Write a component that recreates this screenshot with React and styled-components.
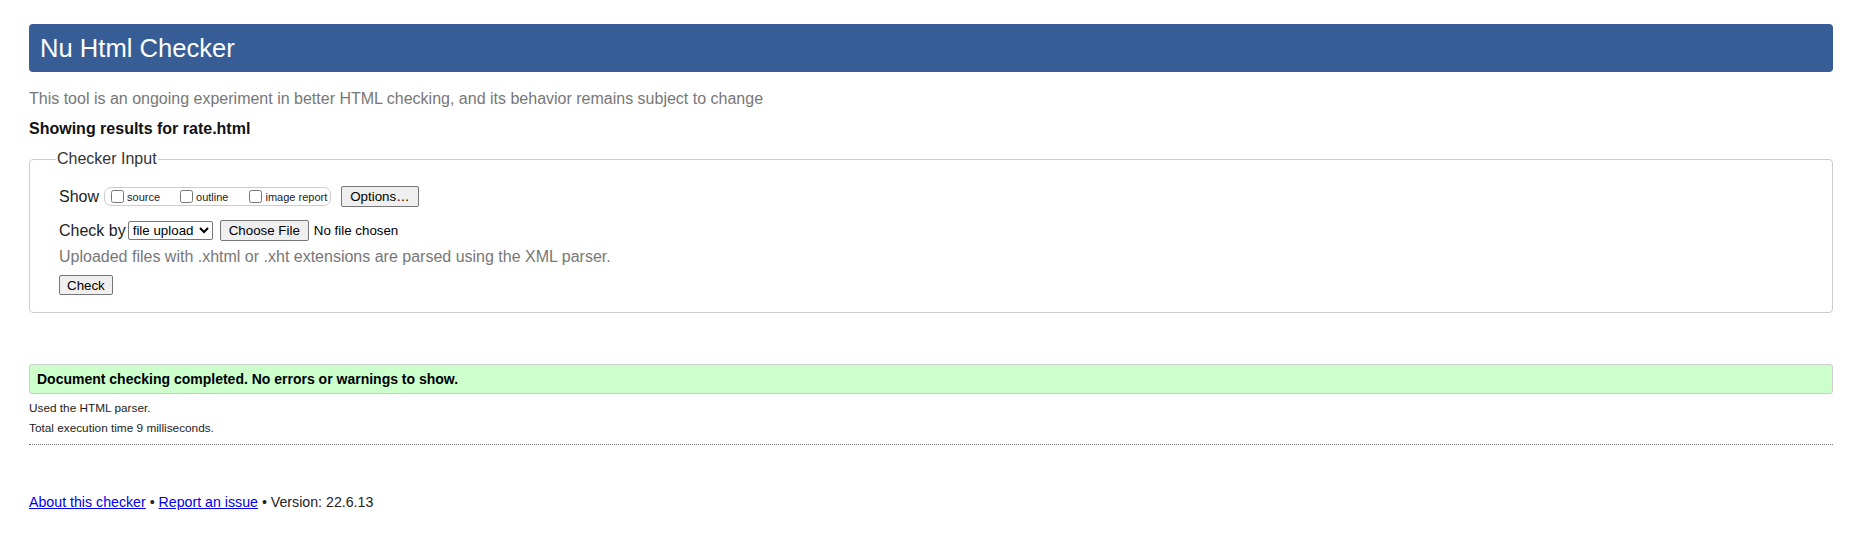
import styled, { createGlobalStyle } from "styled-components";

const GlobalStyle = createGlobalStyle`
  body {
    margin: 0;
    background: #fff;
    font-family: "Liberation Sans", Arial, sans-serif;
    color: #222;
  }
`;

const Page = styled.div`
  padding: 24px 18px 20px 29px;
`;

const Header = styled.h1`
  margin: 0;
  height: 48px;
  line-height: 48px;
  padding: 0 11px;
  background: #365d95;
  border-radius: 4px;
  color: #fff;
  font-size: 25.6px;
  font-weight: normal;
`;

const Intro = styled.p`
  margin: ${(p) => p.top || 17}px 0 0;
  font-size: 16px;
  line-height: 20px;
  color: ${(p) => p.color || "#777"};
  font-weight: ${(p) => (p.bold ? "bold" : "normal")};
`;

const Fieldset = styled.fieldset`
  margin: 10px 0 0;
  padding: 0 29px 17px 29px;
  border: 1px solid #ccc;
  border-radius: 4px;
`;

const Legend = styled.legend`
  margin-left: -3px;
  padding: 0 1px;
  font-size: 16px;
  line-height: 20px;
  color: #333;
`;

const Row = styled.div`
  display: flex;
  align-items: center;
  margin-top: ${(p) => p.top || 0}px;
  height: 21px;
  font-size: 16px;
  color: #222;
`;

const Label = styled.span`
  margin-right: ${(p) => p.gap || 4}px;
`;

const Pill = styled.span`
  display: inline-flex;
  align-items: center;
  height: 17px;
  padding: 0 3px 0 2px;
  border: 1px solid #ccc;
  border-radius: 7px;
  margin-right: 10px;
`;

const Check = styled.label`
  display: inline-flex;
  align-items: center;
  font-size: 11px;
  margin-right: ${(p) => p.gap || 0}px;

  input {
    margin: 0 3px 0 4px;
    width: 13px;
    height: 13px;
  }
`;

const Btn = styled.button`
  font-family: "Liberation Sans", Arial, sans-serif;
  font-size: 13.33px;
  height: ${(p) => p.h || 21}px;
  padding: 0 ${(p) => p.pad || 6}px;
  background: #efefef;
  border: 1px solid #767676;
  border-radius: 2px;
  color: #000;
`;

const Select = styled.select`
  font-family: "Liberation Sans", Arial, sans-serif;
  font-size: 13.33px;
  height: 19px;
  width: 85px;
  padding: 0;
  margin-right: 7px;
  border: 1px solid #767676;
  border-radius: 2px;
  background: #fff;
  color: #000;
`;

const FileName = styled.span`
  font-size: 13.33px;
  margin-left: 5px;
  color: #000;
`;

const Hint = styled.p`
  margin: 6px 0 0;
  font-size: 16px;
  line-height: 20px;
  color: #777;
`;

const SubmitRow = styled.div`
  margin-top: 8px;
  height: 20px;
  display: flex;
`;

const Success = styled.div`
  margin-top: 51px;
  padding: 6px 7px;
  line-height: 16px;
  background: #ccffcc;
  border: 1px solid #ccc;
  border-radius: 3px;
  font-size: 14px;
  font-weight: bold;
  color: #000;
`;

const Detail = styled.p`
  margin: ${(p) => p.top}px 0 0;
  font-size: 11.8px;
  line-height: 14px;
  color: #222;
`;

const Rule = styled.hr`
  margin: 9px 0 0;
  border: 0;
  border-top: 1px dotted #777;
`;

const Footer = styled.p`
  margin: 48px 0 0;
  font-size: 14.2px;
  line-height: 18px;
  color: #222;

  a {
    color: #0000ee;
  }
`;

export default function App() {
  return (
    <Page>
      <GlobalStyle />
      <Header>Nu Html Checker</Header>
      <Intro>
        This tool is an ongoing experiment in better HTML checking, and its behavior remains subject to change
      </Intro>
      <Intro bold color="#111" top={10}>
        Showing results for rate.html
      </Intro>

      <Fieldset>
        <Legend>Checker Input</Legend>
        <Row top={17}>
          <Label gap={5}>Show</Label>
          <Pill>
            <Check gap={16}>
              <input type="checkbox" />source
            </Check>
            <Check gap={17}>
              <input type="checkbox" />outline
            </Check>
            <Check>
              <input type="checkbox" />image report
            </Check>
          </Pill>
          <Btn pad={8}>Options…</Btn>
        </Row>
        <Row top={13}>
          <Label gap={2}>Check by</Label>
          <Select defaultValue="file">
            <option value="address">address</option>
            <option value="file">file upload</option>
            <option value="text">text input</option>
          </Select>
          <Btn pad={8}>Choose File</Btn>
          <FileName>No file chosen</FileName>
        </Row>
        <Hint>Uploaded files with .xhtml or .xht extensions are parsed using the XML parser.</Hint>
        <SubmitRow>
          <Btn pad={7} h={20}>Check</Btn>
        </SubmitRow>
      </Fieldset>

      <Success>Document checking completed. No errors or warnings to show.</Success>
      <Detail top={7}>Used the HTML parser.</Detail>
      <Detail top={6}>Total execution time 9 milliseconds.</Detail>
      <Rule />

      <Footer>
        <a href="#about">About this checker</a> • <a href="#issue">Report an issue</a> • Version: 22.6.13
      </Footer>
    </Page>
  );
}
